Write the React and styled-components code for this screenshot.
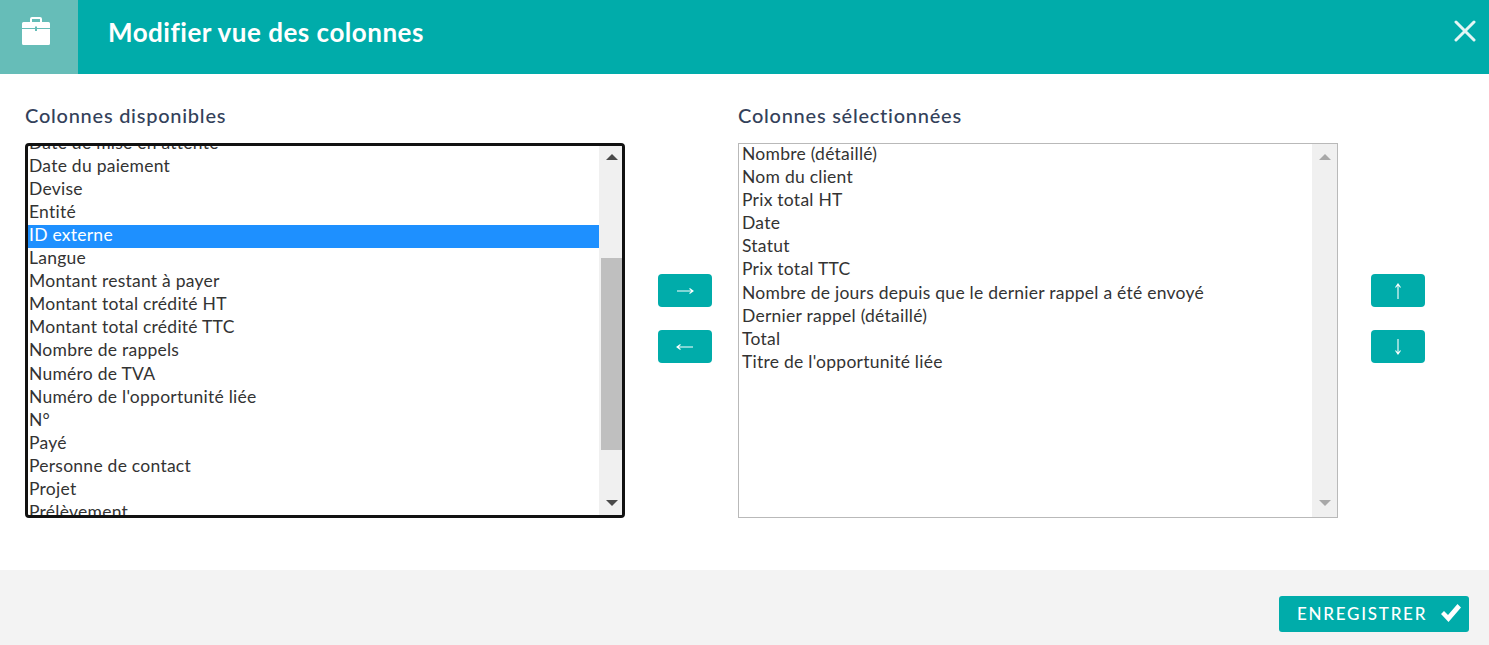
import React from 'react'
import styled, { createGlobalStyle } from 'styled-components'

const GlobalStyle = createGlobalStyle`
  html, body {
    margin: 0;
    padding: 0;
    background: #fff;
  }
  body {
    font-family: 'Lato', 'Liberation Sans', sans-serif;
  }
`

const Page = styled.div`
  width: 1489px;
  height: 645px;
  display: flex;
  flex-direction: column;
  overflow: hidden;
`

const Header = styled.header`
  height: 74px;
  display: flex;
  align-items: center;
  background: #00acaa;
  color: #fff;
`

const IconCell = styled.div`
  width: 78px;
  height: 100%;
  display: flex;
  align-items: center;
  justify-content: center;
  background: #66bdb8;
  padding: 0 7px 12px 0;
  box-sizing: border-box;
`

const Title = styled.h1`
  flex: 1;
  margin: 0 0 10px 30px;
  font-size: 26px;
  font-weight: 700;
  letter-spacing: 0.5px;
`

const Close = styled.button`
  width: 48px;
  height: 62px;
  padding: 0;
  border: 0;
  background: none;
  display: flex;
  align-items: center;
  justify-content: center;
  margin-bottom: 12px;
`

const Main = styled.main`
  flex: 1;
  display: flex;
  padding: 30px 0 0 25px;
`

const Column = styled.section`
  width: 600px;
`

const Label = styled.h2`
  margin: 0 0 15px;
  height: 24px;
  line-height: 22px;
  font-size: 20px;
  font-weight: 500;
  letter-spacing: 0.75px;
  color: #33415a;
`

const Box = styled.div`
  box-sizing: border-box;
  width: 600px;
  height: 375px;
  display: flex;
  overflow: hidden;
  background: #fff;
  border: ${p => (p.$focused ? '3px solid #111' : '1px solid #b9b9b9')};
  border-radius: ${p => (p.$focused ? '4px' : '0')};
`

const Rows = styled.ul`
  flex: 1;
  margin: 0;
  padding: 0;
  list-style: none;
  overflow: hidden;
`

const RowsInner = styled.div`
  margin-top: ${p => p.$offset}px;
`

const Row = styled.li`
  height: 23.1px;
  line-height: 19px;
  padding-left: ${p => p.$pad}px;
  font-size: 17.5px;
  letter-spacing: 0.25px;
  color: ${p => (p.$selected ? '#fff' : '#333')};
  background: ${p => (p.$selected ? '#1e90ff' : 'transparent')};
  white-space: nowrap;
`

const Track = styled.div`
  width: ${p => p.$width}px;
  flex: none;
  position: relative;
  background: #f0f0f0;
`

const Thumb = styled.div`
  position: absolute;
  top: ${p => p.$top}px;
  left: 2px;
  right: 0;
  height: ${p => p.$height}px;
  background: #bfbfbf;
`

const Arrow = styled.div`
  position: absolute;
  left: 7px;
  width: 0;
  height: 0;
  border-left: 6px solid transparent;
  border-right: 6px solid transparent;
  ${p => (p.$dir === 'up' ? `top: ${p.$inset}px` : `bottom: ${p.$inset + 1}px`)};
  ${p => (p.$dir === 'up' ? 'border-bottom' : 'border-top')}: 6px solid ${p => (p.$dim ? '#a8a8a8' : '#4a4a4a')};
`

const Movers = styled.div`
  width: ${p => p.$width}px;
  flex: none;
  display: flex;
  flex-direction: column;
  gap: 23px;
  padding-top: 170px;
  padding-left: 33px;
  box-sizing: border-box;
`

const MoveButton = styled.button`
  width: 54px;
  height: 33px;
  padding: 0;
  border: 0;
  border-radius: 4px;
  background: #00acaa;
  display: flex;
  align-items: center;
  justify-content: center;
`

const Footer = styled.footer`
  height: 75px;
  display: flex;
  justify-content: flex-end;
  align-items: flex-start;
  padding: 26px 20px 0 0;
  box-sizing: border-box;
  background: #f3f3f3;
`

const SaveButton = styled.button`
  width: 190px;
  height: 36px;
  padding: 0 0 2px 18px;
  border: 0;
  border-radius: 3px;
  background: #00acaa;
  color: #fff;
  display: flex;
  align-items: center;
  gap: 13px;
  font-family: inherit;
  font-size: 17px;
  font-weight: 500;
  letter-spacing: 1.75px;
`

const Briefcase = () => (
  <svg width="28" height="28" viewBox="0 0 28 28" fill="#fff">
    <path d="M8 5V2A2 2 0 0 1 10 0H18A2 2 0 0 1 20 2V5H18V2H10V5Z" />
    <path d="M1.500 5H26.500A1.500 1.500 0 0 1 28 6.500V11H15V9.500H13V11H0V6.500A1.500 1.500 0 0 1 1.500 5Z" />
    <path d="M0 12H13V14H15V12H28V26.500A1.500 1.500 0 0 1 26.500 28H1.500A1.500 1.500 0 0 1 0 26.500Z" />
  </svg>
)

const CloseIcon = () => (
  <svg width="22" height="22" viewBox="0 0 22 22" fill="none" stroke="#e4f6f5" strokeWidth="3" strokeLinecap="round">
    <path d="M2 2L20 20M20 2L2 20" />
  </svg>
)

const arrowPaths = {
  right: 'M1 8H17M13.500 5.500L17 8L13.500 10.500',
  left: 'M17 8H1M4.500 5.500L1 8L4.500 10.500',
  up: 'M9 1V16M6.500 4.500L9 1L11.500 4.500',
  down: 'M9 0V15M6.500 11.500L9 15L11.500 11.500',
}

const MoveIcon = ({ dir }) => (
  <svg width="18" height="16" viewBox="0 0 18 16" fill="none" stroke="#fff" strokeWidth="1.100">
    <path d={arrowPaths[dir]} />
  </svg>
)

const CheckIcon = () => (
  <svg width="22" height="20" viewBox="0 0 22 20" fill="#fff">
    <path d="M1 11L4 8L8 12L17.500 1L21 4.500L8.500 19Z" />
  </svg>
)

const available = [
  'Date de mise en attente', 'Date du paiement', 'Devise', 'Entité', 'ID externe', 'Langue',
  'Montant restant à payer', 'Montant total crédité HT', 'Montant total crédité TTC',
  'Nombre de rappels', 'Numéro de TVA', "Numéro de l'opportunité liée", 'N°', 'Payé',
  'Personne de contact', 'Projet', 'Prélèvement',
]

const selected = [
  'Nombre (détaillé)', 'Nom du client', 'Prix total HT', 'Date', 'Statut', 'Prix total TTC',
  'Nombre de jours depuis que le dernier rappel a été envoyé', 'Dernier rappel (détaillé)',
  'Total', "Titre de l'opportunité liée",
]

const App = () => (
  <Page>
    <GlobalStyle />
    <Header>
      <IconCell><Briefcase /></IconCell>
      <Title>Modifier vue des colonnes</Title>
      <Close aria-label="Fermer"><CloseIcon /></Close>
    </Header>
    <Main>
      <Column>
        <Label>Colonnes disponibles</Label>
        <Box $focused>
          <Rows>
            <RowsInner $offset={-13.4}>
              {available.map(name => (
                <Row key={name} $pad={1} $selected={name === 'ID externe'}>{name}</Row>
              ))}
            </RowsInner>
          </Rows>
          <Track $width={23}>
            <Arrow $dir="up" $inset={8} />
            <Thumb $top={112} $height={192} />
            <Arrow $dir="down" $inset={8} />
          </Track>
        </Box>
      </Column>
      <Movers $width={113}>
        <MoveButton aria-label="Ajouter"><MoveIcon dir="right" /></MoveButton>
        <MoveButton aria-label="Retirer"><MoveIcon dir="left" /></MoveButton>
      </Movers>
      <Column>
        <Label>Colonnes sélectionnées</Label>
        <Box>
          <Rows>
            {selected.map(name => (
              <Row key={name} $pad={3}>{name}</Row>
            ))}
          </Rows>
          <Track $width={25}>
            <Arrow $dir="up" $dim $inset={10} />
            <Arrow $dir="down" $dim $inset={10} />
          </Track>
        </Box>
      </Column>
      <Movers $width={151}>
        <MoveButton aria-label="Monter"><MoveIcon dir="up" /></MoveButton>
        <MoveButton aria-label="Descendre"><MoveIcon dir="down" /></MoveButton>
      </Movers>
    </Main>
    <Footer>
      <SaveButton>ENREGISTRER <CheckIcon /></SaveButton>
    </Footer>
  </Page>
)

export default App
